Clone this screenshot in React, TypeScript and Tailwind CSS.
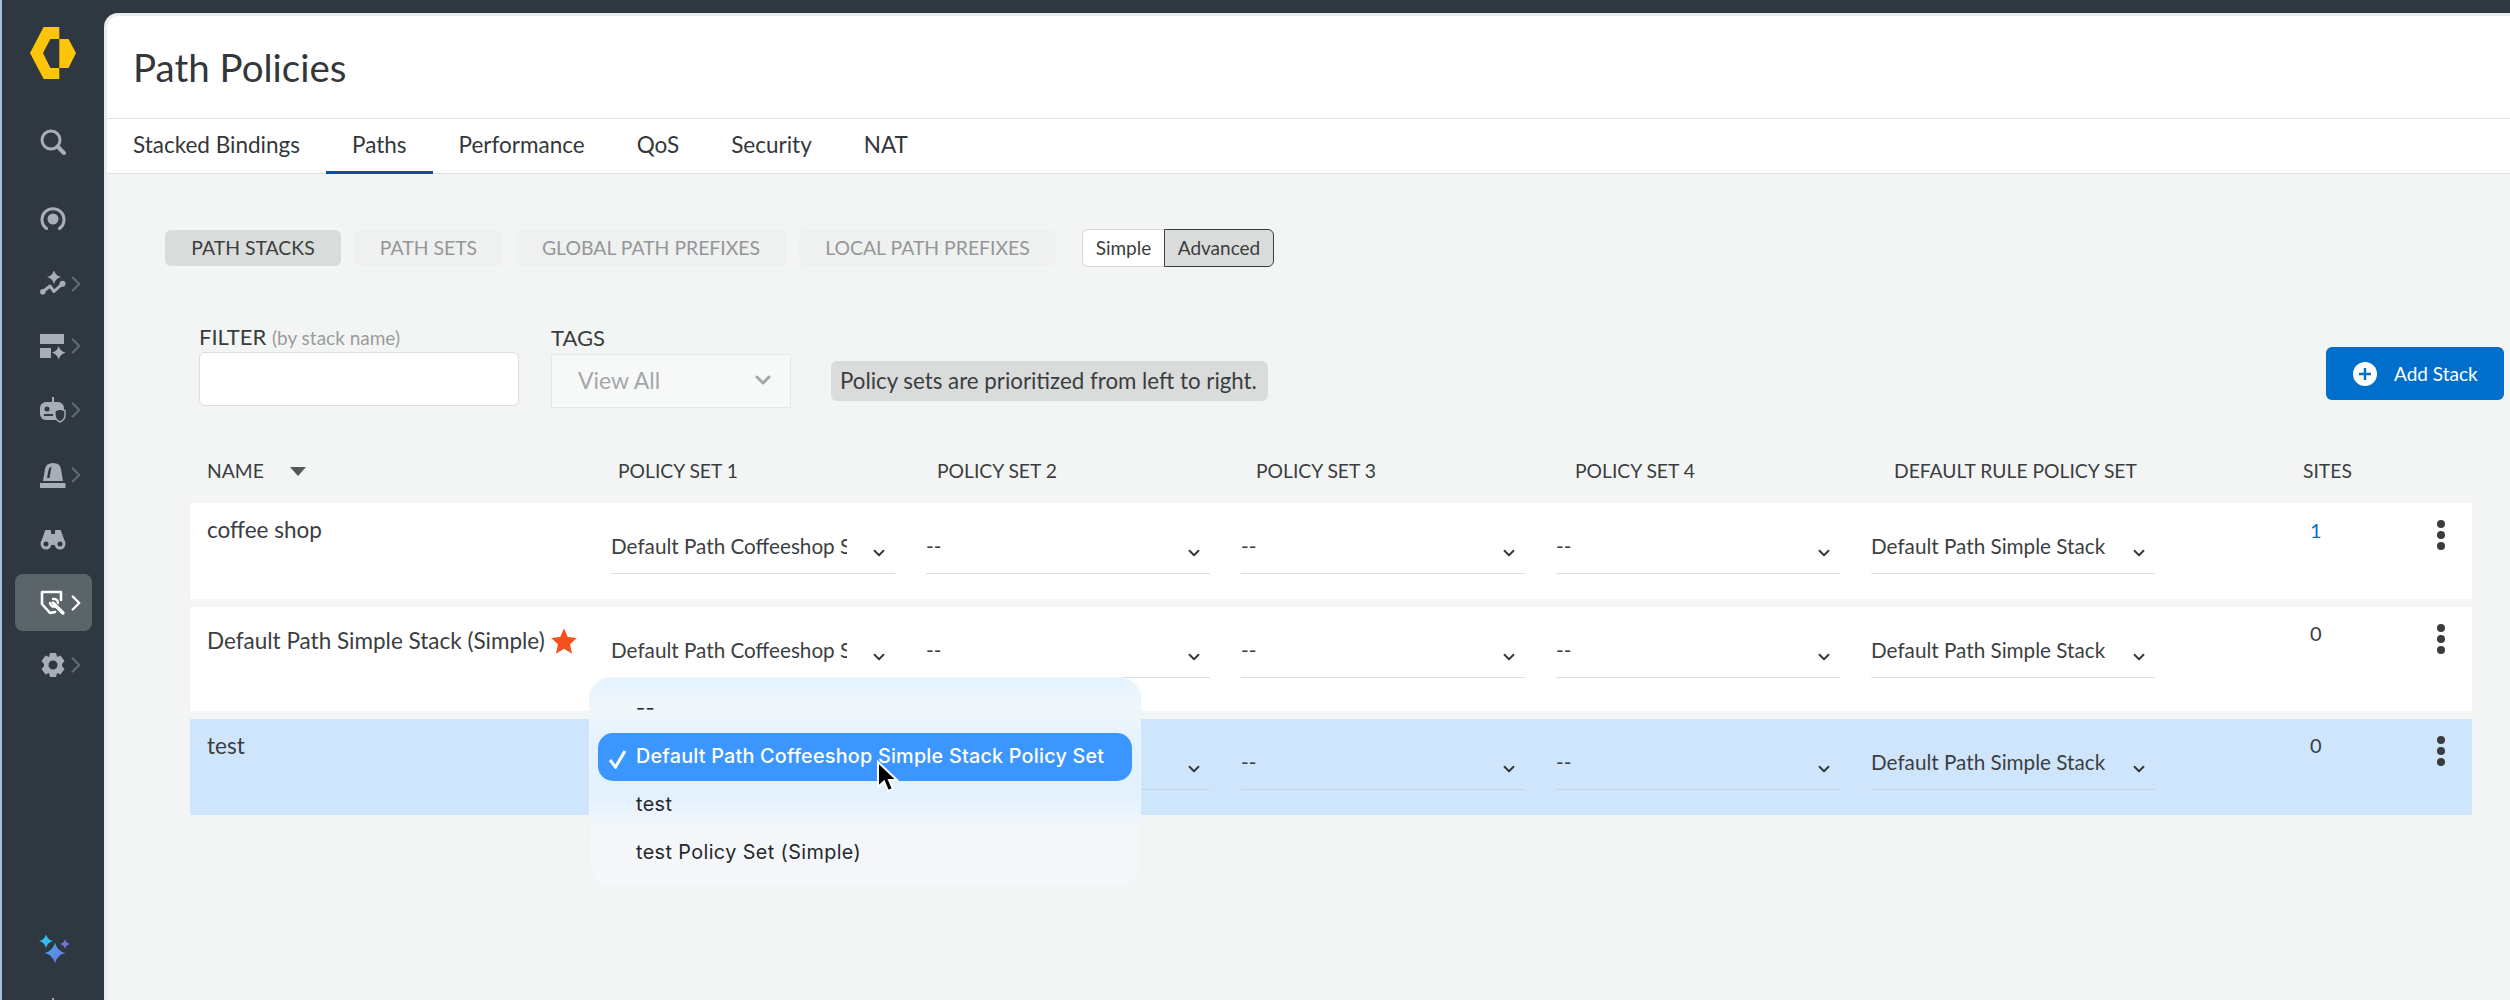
import { ChevronDown, ChevronRight } from "lucide-react";

const sparkle = (cx: number, cy: number, r: number) => {
  const k = r * 0.18;
  return `M${cx} ${cy - r}Q${cx + k} ${cy - k} ${cx + r} ${cy}Q${cx + k} ${cy + k} ${cx} ${cy + r}Q${cx - k} ${cy + k} ${cx - r} ${cy}Q${cx - k} ${cy - k} ${cx} ${cy - r}Z`;
};

const Logo = () => (
  <svg width="46" height="52" viewBox="32 20 135 152">
    <path d="M72 20H118V55H92L70 96L92 140H118V172H72L32 96Z" fill="#fdc50a" />
    <path d="M118 55H145L167 96L145 140H118Z" fill="#fdc50a" />
  </svg>
);

const SearchIcon = () => (
  <svg width="26" height="26" viewBox="0 0 26 26" fill="none" stroke="#a9aeb6">
    <circle cx="11" cy="11" r="9" strokeWidth="3" />
    <path d="M17.5 17.5L24 24" strokeWidth="4" strokeLinecap="round" />
  </svg>
);

const RadarIcon = () => (
  <svg width="26" height="26" viewBox="0 0 26 26" fill="none">
    <path d="M6.5 22.5A11 11 0 1 1 19.5 22.5" stroke="#a9aeb6" strokeWidth="3" strokeLinecap="round" />
    <circle cx="13" cy="13" r="5.5" fill="#a9aeb6" />
  </svg>
);

const InsightIcon = () => (
  <svg width="26" height="26" viewBox="0 0 26 26" fill="none">
    <path d={sparkle(14, 6, 7)} fill="#a9aeb6" />
    <path d="M2.5 21L10 15L14 20.5L22.5 12.7" stroke="#a9aeb6" strokeWidth="3" strokeLinecap="round" strokeLinejoin="round" />
    <circle cx="2.8" cy="20.8" r="2.8" fill="#a9aeb6" />
    <circle cx="22.5" cy="12.7" r="3" fill="#a9aeb6" />
  </svg>
);

const LayoutIcon = () => (
  <svg width="26" height="26" viewBox="0 0 26 26" fill="#a9aeb6">
    <rect x="0" y="1" width="24" height="10" rx="0.5" />
    <rect x="0" y="15" width="11" height="10" rx="0.5" />
    <path d={sparkle(18.7, 19.7, 7)} />
  </svg>
);

const RobotIcon = () => (
  <svg width="26" height="26" viewBox="0 0 26 26">
    <rect x="12" y="0" width="2" height="5" fill="#a9aeb6" />
    <rect x="0" y="5" width="24" height="18" rx="6" fill="#a9aeb6" />
    <circle cx="7" cy="12" r="2.5" fill="#2f3740" />
    <rect x="4" y="17" width="9" height="2" fill="#2f3740" />
    <path d="M15 13.5L20 12L25 13.5V18.5Q25 22.5 20 25Q15 22.5 15 18.5Z" fill="#2f3740" stroke="#a9aeb6" strokeWidth="1.4" />
  </svg>
);

const SirenIcon = () => (
  <svg width="26" height="26" viewBox="0 0 26 26" fill="#a9aeb6">
    <path d="M3 19L5 7Q6 1 13 1Q20 1 21 7L23 19Z" />
    <path d="M7 16L8.5 8Q9 5 11.5 4.5L9.5 16Z" fill="#2f3740" />
    <rect x="0" y="21" width="25.5" height="5" />
  </svg>
);

const BinocularsIcon = () => (
  <svg width="26" height="20" viewBox="0 0 26 20" fill="#a9aeb6">
    <path d="M5 1Q5 0 6 0H10Q11 0 11 1V4H15V1Q15 0 16 0H20Q21 0 21 1L25 12L14 15H12L1 12Z" />
    <circle cx="6" cy="14" r="4" fill="#2f3740" stroke="#a9aeb6" strokeWidth="3" />
    <circle cx="20" cy="14" r="4" fill="#2f3740" stroke="#a9aeb6" strokeWidth="3" />
  </svg>
);

const ShieldWrenchIcon = () => (
  <svg width="26" height="26" viewBox="0 0 26 26" fill="none" stroke="white">
    <path d="M2 2H21V10M2 2V14L10 23L15 22" strokeWidth="2.6" strokeLinecap="round" strokeLinejoin="round" />
    <path d="M13 13L23 23" strokeWidth="3.4" strokeLinecap="round" />
    <path d="M10 13A4 4 0 0 0 15 16.5M13 9A4 4 0 0 1 18 13" strokeWidth="2.4" strokeLinecap="round" />
  </svg>
);

const GearIcon = () => (
  <svg width="26" height="26" viewBox="0 0 26 26" fill="#a9aeb6" fillRule="evenodd">
    <path d="M10 1H16L17 5L20.5 3.4L24.5 9L22 12V14L24.5 17L20.5 22.6L17 21L16 25H10L9 21L5.5 22.6L1.5 17L4 14V12L1.5 9L5.5 3.4L9 5ZM13 8.5A4.5 4.5 0 1 0 13 17.5A4.5 4.5 0 1 0 13 8.5Z" />
  </svg>
);

const SparklesIcon = () => (
  <svg width="32" height="28" viewBox="0 0 32 28">
    <defs>
      <linearGradient id="sp" x1="0" y1="0" x2="1" y2="1">
        <stop offset="0" stopColor="#35b8ee" />
        <stop offset="1" stopColor="#7d63dc" />
      </linearGradient>
    </defs>
    <path d={sparkle(7, 6, 7)} fill="#35bbee" />
    <path d={sparkle(16, 18, 10.5)} fill="url(#sp)" />
    <path d={sparkle(26, 9, 5)} fill="#6f74dc" />
  </svg>
);

const navItems = [
  { icon: <InsightIcon />, arrow: true, cls: "mt-[26px]" },
  { icon: <LayoutIcon />, arrow: true, cls: "mt-[10px]" },
  { icon: <RobotIcon />, arrow: true, cls: "mt-[12px]" },
  { icon: <SirenIcon />, arrow: true, cls: "mt-[13px]" },
  { icon: <BinocularsIcon />, arrow: false, cls: "mt-[13px]" },
  { icon: <ShieldWrenchIcon />, arrow: true, cls: "mt-[8px]", active: true },
  { icon: <GearIcon />, arrow: true, cls: "mt-[8px]" },
];

const Sidebar = () => (
  <aside className="w-[102px] shrink-0 flex flex-col">
    <div className="pl-[28px] pt-[27px]">
      <Logo />
    </div>
    <div className="pl-[38px] mt-[50px]">
      <SearchIcon />
    </div>
    <div className="pl-[38px] mt-[51px]">
      <RadarIcon />
    </div>
    {navItems.map((item, i) => (
      <div
        key={i}
        className={`${item.cls} ml-[13px] w-[77px] pl-[25px] flex items-center rounded-lg ${
          item.active ? "h-[57px] bg-[#5b6469]" : "h-[52px]"
        }`}
      >
        <div className="w-[26px] shrink-0 flex justify-center">{item.icon}</div>
        {item.arrow && (
          <ChevronRight
            size={26}
            strokeWidth={2.2}
            className={`-ml-[3px] shrink-0 ${item.active ? "text-white" : "text-[#5f6972]"}`}
          />
        )}
      </div>
    ))}
    <div className="mt-auto pb-[35px] pl-[37px]">
      <SparklesIcon />
    </div>
    <div className="ml-[50px] w-[2px] h-[2px] bg-[#a9aeb6]" />
  </aside>
);

const tabs = ["Stacked Bindings", "Paths", "Performance", "QoS", "Security", "NAT"];

const pills = [
  { label: "PATH STACKS", w: "w-[176px]", active: true },
  { label: "PATH SETS", w: "w-[149px]" },
  { label: "GLOBAL PATH PREFIXES", w: "w-[270px]" },
  { label: "LOCAL PATH PREFIXES", w: "w-[257px]" },
];

const headers = [
  { label: "POLICY SET 1", w: "w-[319px]" },
  { label: "POLICY SET 2", w: "w-[319px]" },
  { label: "POLICY SET 3", w: "w-[319px]" },
  { label: "POLICY SET 4", w: "w-[319px]" },
  { label: "DEFAULT RULE POLICY SET", w: "w-[409px]" },
];

const Select = ({ value, line }: { value: string; line: string }) => (
  <div className={`w-[284px] h-[44px] mt-[27px] mr-[31px] shrink-0 flex border-b ${line}`}>
    <div className="w-[236px] overflow-hidden whitespace-nowrap text-[20.7px] leading-[33px] text-[#3c3f42]">
      {value}
    </div>
    <ChevronDown size={18} strokeWidth={2.5} className="ml-[23px] mt-[14px] text-[#33373a]" />
  </div>
);

const Kebab = () => (
  <div className="ml-auto mr-[27px] mt-[17px] flex flex-col gap-[3px]">
    <span className="w-[8px] h-[8px] rounded-full bg-[#3a3d40]" />
    <span className="w-[8px] h-[8px] rounded-full bg-[#3a3d40]" />
    <span className="w-[8px] h-[8px] rounded-full bg-[#3a3d40]" />
  </div>
);

type RowProps = {
  name: string;
  first: string;
  second: string;
  sites: string;
  h: string;
  namePt: string;
  sitesPt: string;
  star?: boolean;
  selected?: boolean;
  link?: boolean;
};

const Row = ({ name, first, second, sites, h, namePt, sitesPt, star, selected, link }: RowProps) => {
  const line = selected ? "border-[#c2d6e8]" : "border-[#dcdedf]";
  return (
    <div className={`flex ${h} ${selected ? "bg-[#cfe5fb]" : "bg-white"}`}>
      <div className={`w-[421px] shrink-0 pl-[17px] ${namePt} flex items-start text-[22.5px] leading-[24px] text-[#3a3d40]`}>
        <span>{name}</span>
        {star && (
          <svg width="28" height="28" viewBox="0 0 24 24" className="ml-[5px] -mt-[2px]">
            <path d="M12 1L15.2 8.6L23 9.4L17.2 14.8L18.9 23L12 18.7L5.1 23L6.8 14.8L1 9.4L8.8 8.6Z" fill="#f4511e" />
          </svg>
        )}
      </div>
      <Select value={first} line={line} />
      <Select value={second} line={line} />
      <Select value="--" line={line} />
      <Select value="--" line={line} />
      <Select value="Default Path Simple Stack" line={line} />
      <div className={`ml-[124px] ${sitesPt} text-[20px] leading-[24px] ${link ? "text-[#0a70cc]" : "text-[#3a3d40]"}`}>
        {sites}
      </div>
      <Kebab />
    </div>
  );
};

const Dropdown = () => (
  <div className="absolute left-[587px] top-[677px] w-[552px] h-[210px] rounded-[22px] border border-[#eaf5fc] bg-[linear-gradient(180deg,#e4f3fe_0%,#f1f7fb_14%,#e4f2fe_30%,#e3f1fe_58%,#f4f7fa_72%,#f5f7fa_100%)] pt-[7px] px-[8px] font-['Inter',sans-serif] text-[19.8px] tracking-[0.4px] text-[#26282b]">
    <div className="h-[48px] pl-[38px] flex items-center">--</div>
    <div className="h-[48px] pl-[38px] rounded-[15px] bg-[#3b97ff] text-white font-medium tracking-[0.22px] flex items-center relative">
      <svg width="20" height="20" viewBox="0 0 20 20" fill="none" className="absolute left-[10px] top-[16px]">
        <path d="M2 11L7.5 18L17 2" stroke="white" strokeWidth="3" />
      </svg>
      Default Path Coffeeshop Simple Stack Policy Set
    </div>
    <div className="h-[48px] pl-[38px] flex items-center">test</div>
    <div className="h-[48px] pl-[38px] flex items-center">test Policy Set (Simple)</div>
  </div>
);

const Cursor = () => (
  <svg width="24" height="36" viewBox="0 0 24 36" className="absolute left-[873px] top-[760px]">
    <path d="M3 2V27L9 21.5L13 31L18 29L14 20H22Z" fill="black" stroke="white" strokeWidth="2" />
  </svg>
);

const longName = "Default Path Coffeeshop Simple Stack Policy Set";

export default function App() {
  return (
    <div className="relative w-[2510px] h-[1000px] overflow-hidden flex bg-[#2f3740] border-l-2 border-[#a9c0dc] font-['Lato',sans-serif]">
      <Sidebar />
      <main className="flex-1 mt-[13px] flex flex-col rounded-tl-[14px] border-t-[3px] border-l-[3px] border-[#e6ecef] bg-[#f3f5f4] overflow-hidden">
        <header className="h-[103px] shrink-0 bg-white border-b border-[#dfe1e2] pl-[26px] pt-[27px]">
          <h1 className="text-[38.5px] leading-[48px] text-[#33373a]">Path Policies</h1>
        </header>
        <nav className="h-[55px] shrink-0 bg-white border-b border-[#dfe1e2] flex">
          {tabs.map((t) => (
            <div
              key={t}
              className={`px-[26px] h-[55px] leading-[52px] text-[22.5px] text-[#33373a] ${
                t === "Paths" ? "border-b-[3px] border-[#0a4fa3]" : ""
              }`}
            >
              {t}
            </div>
          ))}
        </nav>
        <div className="flex-1 flex flex-col">
          <div className="flex items-center ml-[58px] mt-[55px] gap-[13px]">
            {pills.map((p) => (
              <div
                key={p.label}
                className={`${p.w} h-[36px] rounded-[6px] flex items-center justify-center text-[19.4px] ${
                  p.active ? "bg-[#dadcdc] text-[#3a3d40]" : "bg-[#eff0f0] text-[#949798]"
                }`}
              >
                {p.label}
              </div>
            ))}
            <div className="flex h-[38px] ml-[13px] text-[19px] text-[#3a3d40]">
              <div className="w-[82px] flex items-center justify-center bg-white rounded-l-[6px] border border-r-0 border-[#d8dada]">
                Simple
              </div>
              <div className="w-[110px] flex items-center justify-center bg-[#dadcdc] rounded-r-[6px] border border-[#3a3d40]">
                Advanced
              </div>
            </div>
          </div>

          <div className="flex items-start mt-[60px] ml-[92px]">
            <div className="w-[320px] shrink-0">
              <div className="h-[25px] leading-[20px] text-[22px] text-[#3a3d40]">
                FILTER <span className="text-[19px] text-[#9a9c9e]">(by stack name)</span>
              </div>
              <div className="h-[54px] bg-white border border-[#dcdede] rounded-[6px]" />
            </div>
            <div className="w-[240px] shrink-0 ml-[32px]">
              <div className="h-[27px] leading-[22px] text-[22px] text-[#3a3d40]">TAGS</div>
              <div className="h-[54px] bg-[#f7f9f8] border border-[#e6e8e8] flex items-center justify-between pl-[26px] pr-[15px] pb-[2px] text-[23px] text-[#a4a6a8]">
                View All
                <ChevronDown size={24} strokeWidth={3} className="text-[#a4a6a8]" />
              </div>
            </div>
            <div className="mt-[34px] ml-[40px] h-[40px] w-[437px] rounded-[6px] bg-[#dadcdc] flex items-center pl-[9px] text-[22.3px] text-[#3a3d40] whitespace-nowrap">
              Policy sets are prioritized from left to right.
            </div>
            <button className="ml-auto mr-[6px] mt-[20px] w-[178px] h-[53px] rounded-[6px] bg-[#006fcc] flex items-center pl-[27px] text-white text-[19px]">
              <svg width="24" height="24" viewBox="0 0 24 24" className="mr-[17px]">
                <circle cx="12" cy="12" r="12" fill="white" />
                <path d="M12 6V18M6 12H18" stroke="#006fcc" strokeWidth="2.4" />
              </svg>
              <span className="pt-[2px]">Add Stack</span>
            </button>
          </div>

          <div className="w-[2282px] ml-[83px] mt-[36px] flex flex-col gap-[8px]">
            <div className="h-[55px] -mb-[4px] flex items-center text-[19.3px] text-[#3a3d40]">
              <div className="w-[428px] shrink-0 pl-[17px] flex items-center">
                NAME
                <span className="ml-[26px] w-0 h-0 border-x-[8px] border-t-[9px] border-x-transparent border-t-[#55585a]" />
              </div>
              {headers.map((h) => (
                <div key={h.label} className={`${h.w} shrink-0`}>
                  {h.label}
                </div>
              ))}
              <div>SITES</div>
            </div>
            <Row name="coffee shop" first={longName} second="--" sites="1" h="h-[96px]" namePt="pt-[15px]" sitesPt="pt-[15px]" link />
            <Row name="Default Path Simple Stack (Simple)" first={longName} second="--" sites="0" h="h-[104px]" namePt="pt-[22px]" sitesPt="pt-[14px]" star />
            <Row name="test" first="" second="" sites="0" h="h-[96px]" namePt="pt-[15px]" sitesPt="pt-[14px]" selected />
          </div>
        </div>
      </main>
      <Dropdown />
      <Cursor />
    </div>
  );
}
